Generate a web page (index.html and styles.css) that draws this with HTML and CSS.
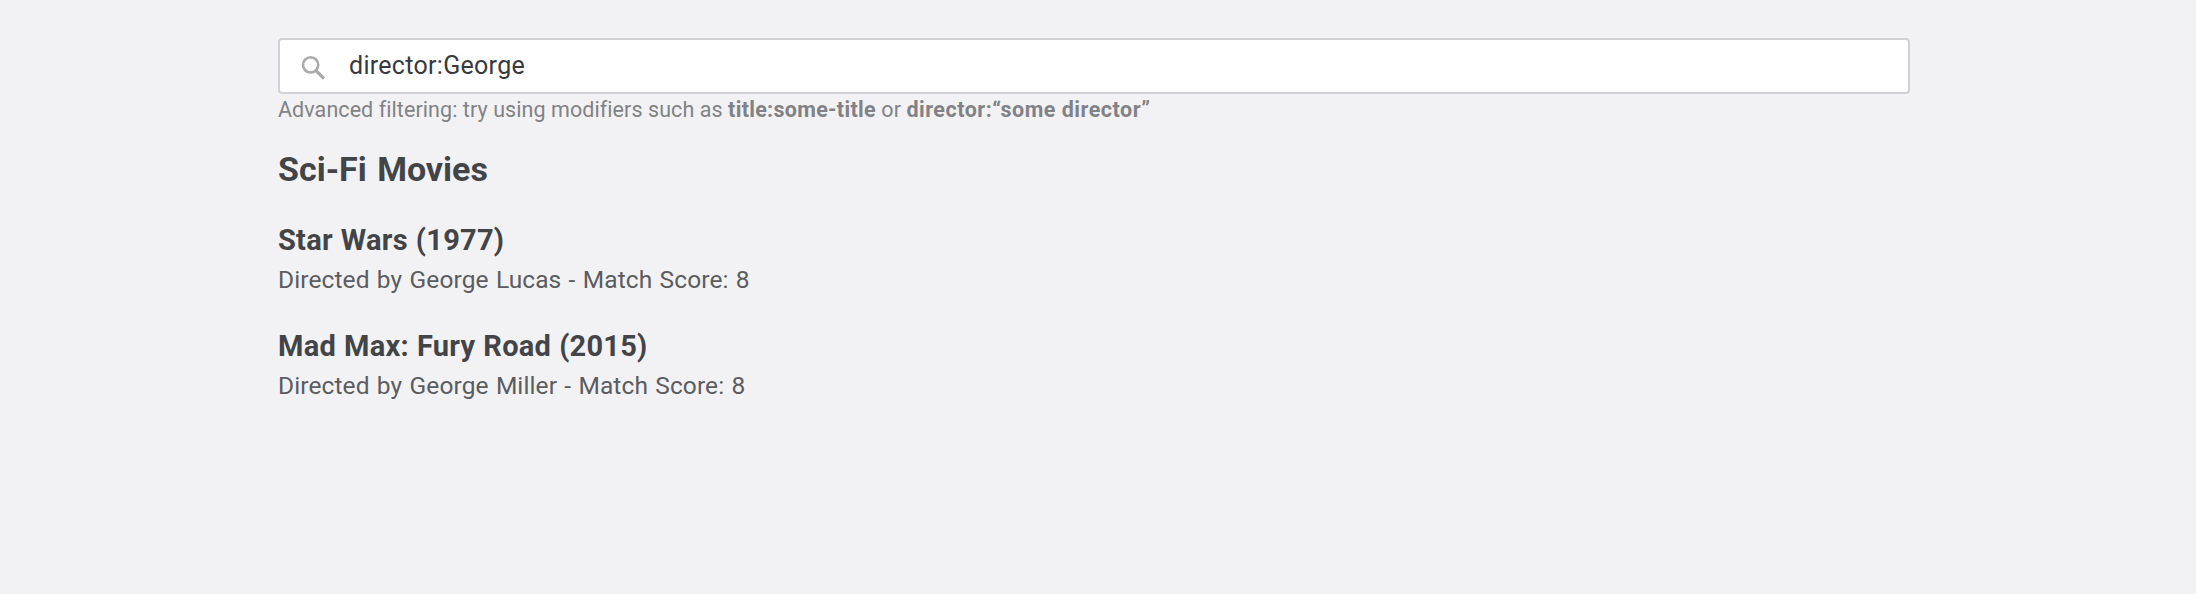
FILE: index.html
```html
<!DOCTYPE html>
<html lang="en">
<head>
<meta charset="utf-8">
<title>Sci-Fi Movies</title>
<link rel="stylesheet" href="styles.css">
</head>
<body>
<main class="page">
  <div class="search">
    <svg class="search-icon" viewBox="0 0 24 24" fill="none" stroke="#aaa" aria-hidden="true"><circle cx="9.6" cy="8.9" r="7.6" stroke-width="2.6"/><path d="M15 14.7L23 22.6" stroke-width="3.2"/></svg>
    <span class="search-text">director:George</span>
  </div>
  <p class="hint">Advanced filtering: try using modifiers such as <b class="hint-title">title:some-title</b> or <b class="hint-director">director:“some director”</b></p>
  <h1 class="heading">Sci-Fi Movies</h1>
  <article class="movie">
    <h2 class="movie-title">Star Wars (1977)</h2>
    <p class="movie-info">Directed by George Lucas - Match Score: 8</p>
  </article>
  <article class="movie">
    <h2 class="movie-title">Mad Max: Fury Road (2015)</h2>
    <p class="movie-info">Directed by George Miller - Match Score: 8</p>
  </article>
</main>
</body>
</html>
```
FILE: styles.css
```css
body {
  margin: 0;
  background: #f2f2f4;
  color: #434447;
  font-family: Roboto, "Liberation Sans", sans-serif;
}
.page {
  width: 1632px;
  padding: 38px 0 0 278px;
}
.search {
  box-sizing: border-box;
  height: 56px;
  display: flex;
  align-items: center;
  gap: 24px;
  padding-left: 21px;
  background: #fff;
  border: 2px solid #d0d1d5;
  border-radius: 4px;
}
.search-icon {
  width: 24px;
  height: 24px;
  margin-top: 3px;
}
.search-text {
  color: #38393c;
  font-size: 25px;
  line-height: 52px;
  letter-spacing: 0.3px;
}
.hint {
  margin: 0;
  color: #818286;
  font-size: 21.5px;
  line-height: 32px;
  letter-spacing: 0.07px;
  white-space: nowrap;
}
.hint-title {
  font-weight: 700;
  letter-spacing: 0.3px;
}
.hint-director {
  font-weight: 700;
  letter-spacing: 0.5px;
}
.heading {
  margin: 21px 0 0;
  font-size: 34px;
  line-height: 44px;
  font-weight: 700;
  word-spacing: 2px;
}
.movie {
  margin-top: 30px;
}
.heading + .movie {
  margin-top: 31px;
}
.movie-title {
  margin: 0;
  font-size: 29px;
  line-height: 36px;
  font-weight: 700;
  letter-spacing: 0.25px;
  word-spacing: 0.6px;
}
.movie-info {
  margin: 4px 0 0;
  color: #5b5c5f;
  font-size: 24.5px;
  line-height: 36px;
  letter-spacing: 0.1px;
  word-spacing: 1.1px;
}
```
